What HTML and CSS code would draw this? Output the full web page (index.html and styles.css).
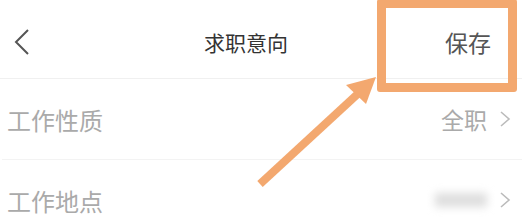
FILE: index.html
```html
<!DOCTYPE html>
<html lang="zh">
<head>
<meta charset="utf-8">
<link rel="stylesheet" href="styles.css">
</head>
<body>
<div class="page">
  <header class="bar">
    <div class="back">
      <svg width="20" height="30" viewBox="0 0 20 30"><polyline points="14,3 2,15 14,27" fill="none" stroke="#555" stroke-width="2"/></svg>
    </div>
    <div class="title">求职意向</div>
    <div class="save">保存</div>
  </header>
  <div class="row">
    <span class="label">工作性质</span>
    <span class="value">全职<svg class="chev" width="12" height="18" viewBox="0 0 12 18"><polyline points="2,2 10,9 2,16" fill="none" stroke="#bbb" stroke-width="1.6"/></svg></span>
  </div>
  <div class="row">
    <span class="label">工作地点</span>
    <span class="value"><span class="blur"></span><svg class="chev" width="12" height="18" viewBox="0 0 12 18"><polyline points="2,2 10,9 2,16" fill="none" stroke="#bbb" stroke-width="1.6"/></svg></span>
  </div>
  <div class="highlight"></div>
  <svg class="arrow" width="522" height="218" viewBox="0 0 522 218">
    <line x1="260" y1="184" x2="362" y2="90" stroke="#f3a86f" stroke-width="8" stroke-linecap="butt"/>
    <polygon points="376,77 346,85 366,104" fill="#f3a86f"/>
  </svg>
</div>
</body>
</html>
```
FILE: styles.css
```css
html, body {
  margin: 0;
  padding: 0;
  background: #fff;
}
.page {
  position: relative;
  width: 522px;
  height: 218px;
  overflow: hidden;
  font-family: "Noto Sans CJK SC", "Noto Sans", sans-serif;
}
.bar {
  height: 72px;
  padding-top: 6px;
  display: flex;
  align-items: center;
  border-bottom: 1px solid #f0f0f0;
  padding-left: 14px;
  padding-right: 31px;
}
.back {
  width: 20px;
  height: 30px;
  display: flex;
}
.title {
  font-size: 21px;
  color: #333;
  margin-left: 170px;
}
.save {
  font-size: 23px;
  color: #555;
  margin-left: auto;
}
.row {
  height: 80px;
  display: flex;
  align-items: center;
  justify-content: space-between;
  border-bottom: 1px solid #f3f3f3;
  padding-left: 5px;
  padding-right: 11px;
  margin-left: 2px;
}
.label {
  font-size: 24px;
  color: #aaa;
}
.value {
  display: flex;
  align-items: center;
  font-size: 23px;
  color: #aaa;
}
.chev {
  margin-left: 12px;
}
.blur {
  display: block;
  width: 52px;
  height: 14px;
  background: #dedede;
  filter: blur(4px);
}
.highlight {
  position: absolute;
  left: 377px;
  top: -1px;
  width: 122px;
  height: 75px;
  border: 9px solid #f3a86f;
  border-radius: 3px;
}
.arrow {
  position: absolute;
  left: 0;
  top: 0;
}
```
